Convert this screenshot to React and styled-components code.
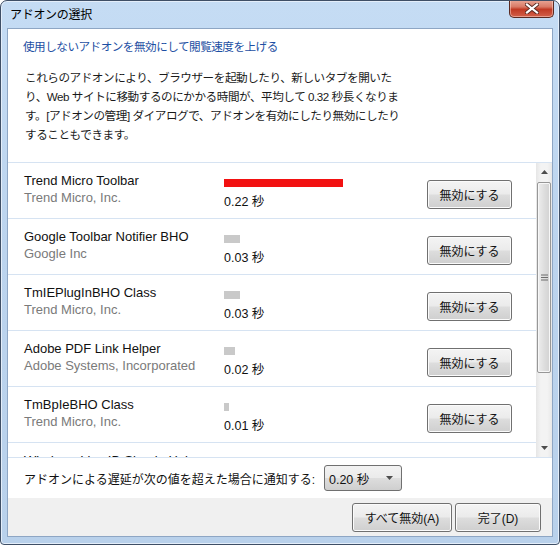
import React from "react";
import styled, { createGlobalStyle } from "styled-components";

const GlobalStyle = createGlobalStyle`
  html, body {
    margin: 0;
    padding: 0;
    background: #ffffff;
  }
  body {
    font-family: "Liberation Sans", "Noto Sans CJK JP", sans-serif;
    color: #000;
  }
`;

const JP = `"Liberation Sans", "Noto Sans CJK JP", sans-serif`;

const Window = styled.div`
  width: 560px;
  height: 545px;
  box-sizing: border-box;
  border: 1px solid #3f4f66;
  border-radius: 7px 7px 4px 4px;
  background: linear-gradient(180deg, #c5dcf4 0%, #bcd4ee 45%, #b9d1eb 100%);
  box-shadow: inset 0 0 0 1px #e4eefa;
  display: flex;
  flex-direction: column;
  overflow: hidden;
`;

const TitleBar = styled.div`
  height: 27px;
  display: flex;
  align-items: flex-start;
  justify-content: space-between;
  padding-left: 9px;
  padding-right: 5px;
`;

const Title = styled.div`
  font-family: ${JP};
  font-size: 12px;
  letter-spacing: -0.3px;
  line-height: 14px;
  margin-top: 7px;
`;

const CloseButton = styled.div`
  width: 45px;
  height: 18px;
  margin-top: -1px;
  box-sizing: border-box;
  border: 1px solid #5a2a22;
  border-top: none;
  border-radius: 0 0 5px 5px;
  background: linear-gradient(180deg, #e9a898 0%, #d97a66 40%, #c13a24 55%, #d2604a 100%);
  box-shadow: inset 0 0 0 1px rgba(255, 220, 210, 0.5);
  display: flex;
  align-items: center;
  justify-content: center;
`;

const Client = styled.div`
  margin: 0 6px 7px 6px;
  flex: 1;
  border: 1px solid #8ea6c4;
  background: #ffffff;
  display: flex;
  flex-direction: column;
  overflow: hidden;
`;

const Header = styled.div`
  height: 134px;
  box-sizing: border-box;
  padding: 9px 0 0 15px;
  border-bottom: 1px solid #d6e3f2;
`;

const Heading = styled.div`
  font-family: ${JP};
  font-size: 11.6px;
  letter-spacing: -0.5px;
  line-height: 18px;
  color: #1d4fa3;
`;

const Paragraph = styled.p`
  margin: 12px 0 0 2px;
  font-family: ${JP};
  font-size: 11.6px;
  letter-spacing: -0.45px;
  line-height: 19px;
  color: #1a1a1a;
`;

const ListArea = styled.div`
  height: 294px;
  display: flex;
  border-bottom: 1px solid #d6e3f2;
`;

const Rows = styled.div`
  flex: 1;
  overflow: hidden;
`;

const Row = styled.div`
  height: 56px;
  box-sizing: border-box;
  border-bottom: 1px solid #d6e3f2;
  display: flex;
  align-items: flex-start;
  padding: 9px 24px 0 16px;
  overflow: hidden;
`;

const Names = styled.div`
  width: 200px;
`;

const Name = styled.div`
  font-size: 13px;
  line-height: 17px;
  color: #111;
  white-space: nowrap;
`;

const Company = styled.div`
  font-size: 13px;
  line-height: 17px;
  color: #7a7a7a;
  white-space: nowrap;
`;

const Timing = styled.div`
  flex: 1;
  padding-top: 7px;
`;

const Bar = styled.div`
  height: 8px;
  background: ${(p) => (p.$hot ? "#f21111" : "#c9c9c9")};
`;

const Time = styled.div`
  font-family: ${JP};
  font-size: 12.5px;
  line-height: 14px;
  margin-top: 8px;
  color: #111;
`;

const Button = styled.button`
  font-family: ${JP};
  font-size: 12px;
  color: #111;
  width: ${(p) => p.$w || 85}px;
  height: 29px;
  padding: 0;
  margin-top: ${(p) => p.$top || 0}px;
  border: 1px solid #707070;
  border-radius: 3px;
  background: linear-gradient(180deg, #f4f4f4 0%, #ebebeb 48%, #dddddd 52%, #cfcfcf 100%);
  box-shadow: inset 0 0 0 1px #fbfbfb;
  white-space: nowrap;
  cursor: pointer;
`;

const Scrollbar = styled.div`
  width: 16px;
  background: linear-gradient(90deg, #e6e6e6 0%, #f3f3f3 30%, #f3f3f3 70%, #e8e8e8 100%);
  display: flex;
  flex-direction: column;
  align-items: center;
`;

const ArrowBox = styled.div`
  height: 18px;
  display: flex;
  align-items: center;
  justify-content: center;
`;

const Thumb = styled.div`
  width: 14px;
  height: 191px;
  margin-top: 1px;
  box-sizing: border-box;
  border: 1px solid #979797;
  border-radius: 2px;
  background: linear-gradient(90deg, #eeeeee 0%, #dedede 50%, #d2d2d2 100%);
  box-shadow: inset 0 0 0 1px #f7f7f7;
  display: flex;
  align-items: center;
  justify-content: center;
`;

const Spacer = styled.div`
  flex: 1;
`;

const NotifyRow = styled.div`
  height: 40px;
  display: flex;
  align-items: center;
  padding-left: 16px;
  gap: 9px;
`;

const NotifyText = styled.span`
  font-family: ${JP};
  font-size: 12px;
  letter-spacing: 0;
  color: #111;
`;

const Select = styled.div`
  width: 78px;
  height: 26px;
  box-sizing: border-box;
  border: 1px solid #707070;
  border-radius: 3px;
  background: linear-gradient(180deg, #f2f2f2 0%, #ebebeb 48%, #dddddd 52%, #cfcfcf 100%);
  display: flex;
  align-items: center;
  justify-content: space-between;
  padding: 0 8px 0 4px;
  font-family: ${JP};
  font-size: 12.5px;
  color: #111;
`;

const Footer = styled.div`
  flex: 1;
  background: #f0f0f0;
  display: flex;
  justify-content: flex-end;
  align-items: flex-start;
  padding: 5px 11px 0 0;
  gap: 3px;
`;

const addons = [
  { name: "Trend Micro Toolbar", company: "Trend Micro, Inc.", time: 0.22 },
  { name: "Google Toolbar Notifier BHO", company: "Google Inc", time: 0.03 },
  { name: "TmIEPlugInBHO Class", company: "Trend Micro, Inc.", time: 0.03 },
  { name: "Adobe PDF Link Helper", company: "Adobe Systems, Incorporated", time: 0.02 },
  { name: "TmBpIeBHO Class", company: "Trend Micro, Inc.", time: 0.01 },
  { name: "Windows Live ID Sign-in Helper", company: "Microsoft Corp.", time: 0.01 },
];

const Tri = ({ down }) => (
  <svg width="7" height="4" viewBox="0 0 7 4">
    <path d={down ? "M0 0 H7 L3.5 4 Z" : "M0 4 H7 L3.5 0 Z"} fill="#4d4d4d" />
  </svg>
);

export default function App() {
  return (
    <>
      <GlobalStyle />
      <Window>
        <TitleBar>
          <Title>アドオンの選択</Title>
          <CloseButton>
            <svg width="14" height="11" viewBox="0 0 14 11">
              <path
                d="M2 1.5 L12 9.5 M12 1.5 L2 9.5"
                stroke="#5a2a22"
                strokeWidth="4"
                strokeLinecap="square"
              />
              <path
                d="M2 1.5 L12 9.5 M12 1.5 L2 9.5"
                stroke="#ffffff"
                strokeWidth="2.2"
                strokeLinecap="square"
              />
            </svg>
          </CloseButton>
        </TitleBar>
        <Client>
          <Header>
            <Heading>使用しないアドオンを無効にして閲覧速度を上げる</Heading>
            <Paragraph>
              これらのアドオンにより、ブラウザーを起動したり、新しいタブを開いた
              <br />
              り、Web サイトに移動するのにかかる時間が、平均して 0.32 秒長くなりま
              <br />
              す。[アドオンの管理] ダイアログで、アドオンを有効にしたり無効にしたり
              <br />
              することもできます。
            </Paragraph>
          </Header>
          <ListArea>
            <Rows>
              {addons.map((a) => (
                <Row key={a.name}>
                  <Names>
                    <Name>{a.name}</Name>
                    <Company>{a.company}</Company>
                  </Names>
                  <Timing>
                    <Bar
                      $hot={a.time >= 0.2}
                      style={{ width: Math.round(a.time * 540) }}
                    />
                    <Time>{a.time.toFixed(2)} 秒</Time>
                  </Timing>
                  <Button $top={8}>無効にする</Button>
                </Row>
              ))}
            </Rows>
            <Scrollbar>
              <ArrowBox>
                <Tri />
              </ArrowBox>
              <Thumb>
                <svg width="7" height="7" viewBox="0 0 7 7">
                  <path d="M0 1 H7 M0 3.5 H7 M0 6 H7" stroke="#6d6d6d" strokeWidth="1" />
                </svg>
              </Thumb>
              <Spacer />
              <ArrowBox>
                <Tri down />
              </ArrowBox>
            </Scrollbar>
          </ListArea>
          <NotifyRow>
            <NotifyText>アドオンによる遅延が次の値を超えた場合に通知する:</NotifyText>
            <Select>
              <span>0.20 秒</span>
              <Tri down />
            </Select>
          </NotifyRow>
          <Footer>
            <Button $w={100}>すべて無効(A)</Button>
            <Button $w={86}>完了(D)</Button>
          </Footer>
        </Client>
      </Window>
    </>
  );
}
